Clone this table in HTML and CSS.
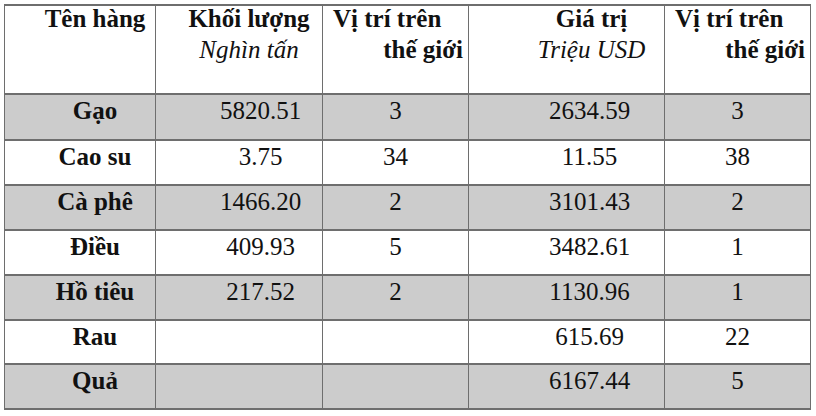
FILE: index.html
```html
<!DOCTYPE html>
<html>
<head>
<meta charset="utf-8">
<link rel="stylesheet" href="styles.css">
</head>
<body>
<div class="grid" role="table">
  <div class="row head" role="row">
    <div class="cell name-h">Tên hàng</div>
    <div class="cell vol-h"><span class="l">Khối lượng</span><span class="unit">Nghìn tấn</span></div>
    <div class="cell rank-h"><span class="first">Vị trí trên</span><span class="second">thế giới</span></div>
    <div class="cell val-h"><span class="l">Giá trị</span><span class="unit">Triệu USD</span></div>
    <div class="cell rank-h"><span class="first">Vị trí trên</span><span class="second">thế giới</span></div>
  </div>
  <div class="row shade" role="row"><div class="cell name">Gạo</div><div class="cell vol">5820.51</div><div class="cell rank">3</div><div class="cell val">2634.59</div><div class="cell rank">3</div></div>
  <div class="row" role="row"><div class="cell name">Cao su</div><div class="cell vol">3.75</div><div class="cell rank">34</div><div class="cell val">11.55</div><div class="cell rank">38</div></div>
  <div class="row shade" role="row"><div class="cell name">Cà phê</div><div class="cell vol">1466.20</div><div class="cell rank">2</div><div class="cell val">3101.43</div><div class="cell rank">2</div></div>
  <div class="row" role="row"><div class="cell name">Điều</div><div class="cell vol">409.93</div><div class="cell rank">5</div><div class="cell val">3482.61</div><div class="cell rank">1</div></div>
  <div class="row shade" role="row"><div class="cell name">Hồ tiêu</div><div class="cell vol">217.52</div><div class="cell rank">2</div><div class="cell val">1130.96</div><div class="cell rank">1</div></div>
  <div class="row" role="row"><div class="cell name">Rau</div><div class="cell vol"></div><div class="cell rank"></div><div class="cell val">615.69</div><div class="cell rank">22</div></div>
  <div class="row shade" role="row"><div class="cell name">Quả</div><div class="cell vol"></div><div class="cell rank"></div><div class="cell val">6167.44</div><div class="cell rank">5</div></div>
</div>
</body>
</html>
```

FILE: styles.css
```css
html, body {
  margin: 0;
  padding: 0;
  background: #ffffff;
}
body {
  font-family: "Liberation Serif", serif;
  color: #111111;
  font-size: 25px;
}
.grid {
  margin: 4px 0 0 4px;
  width: 807px;
  box-sizing: border-box;
  display: grid;
  grid-template-columns: 150px 166px 145px 195px 145px;
  grid-template-rows: 87px 44px 43px 43px 43px 43px 42px 43px;
  column-gap: 1px;
  row-gap: 2px;
  padding: 2px 1px 2px 1px;
  background: #6e6e6e;
}
.row {
  display: contents;
}
.cell {
  background: #ffffff;
  line-height: 31px;
  white-space: nowrap;
  overflow: visible;
}
.shade .cell {
  background: #cccccc;
}
.head .cell {
  font-weight: bold;
}
.l, .first {
  display: block;
  line-height: 25px;
}
.unit, .second {
  display: block;
  line-height: 37px;
}
.unit {
  font-weight: normal;
  font-style: italic;
}
.name-h, .name {
  text-align: center;
  padding-left: 30px;
  font-weight: bold;
}
.name-h {
  line-height: 25px;
}
.vol-h {
  text-align: center;
  padding-left: 20px;
}
.val-h {
  text-align: center;
  padding-left: 50px;
}
.rank-h {
  padding: 0 5px 0 10px;
}
.first {
  text-align: left;
}
.second {
  text-align: right;
}
.vol {
  text-align: center;
  padding-left: 43px;
}
.rank {
  text-align: center;
}
.val {
  text-align: center;
  padding-left: 46px;
}
```
